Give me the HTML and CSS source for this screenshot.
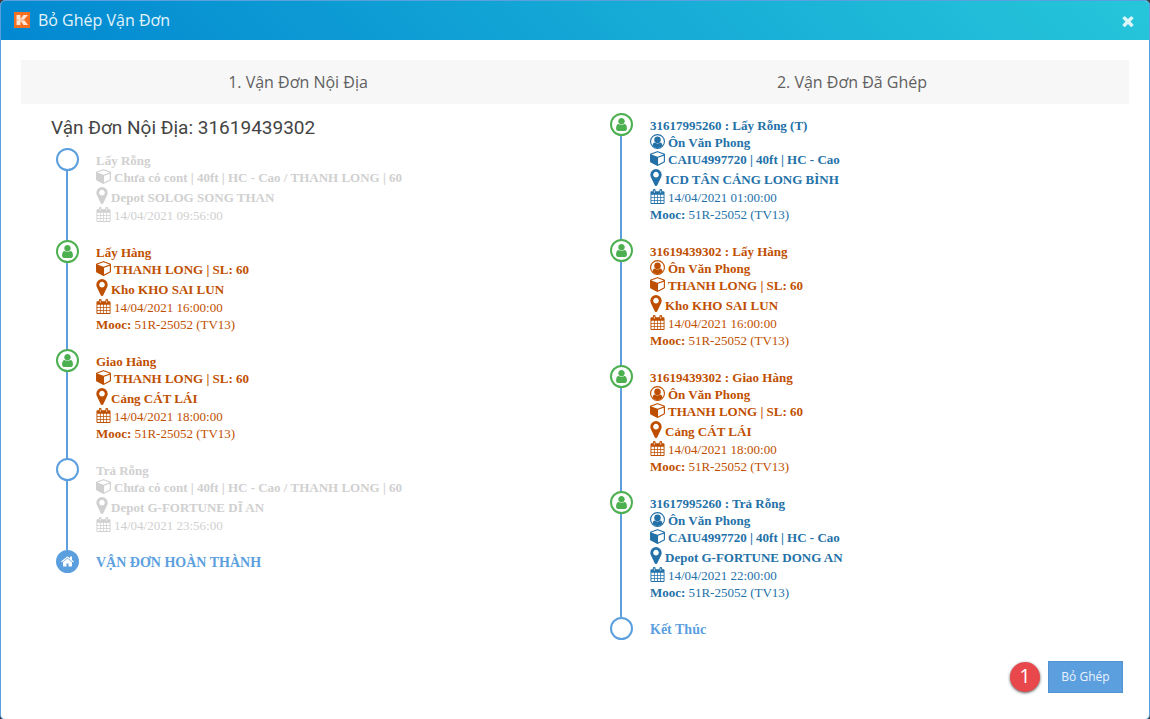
FILE: index.html
```html
<!DOCTYPE html>
<html lang="vi">
<head>
<meta charset="utf-8">
<title>Bỏ Ghép Vận Đơn</title>
<link rel="stylesheet" href="styles.css">
</head>
<body>
<svg class="sprite" aria-hidden="true">
  <symbol id="user" viewBox="256 128 1280 1536"><path d="M1536 1399q0 109-62.5 187t-150.5 78h-854q-88 0-150.5-78t-62.5-187q0-85 8.5-160.5t31.5-152 58.5-131 94-89 134.5-34.5q131 128 313 128t313-128q76 0 134.5 34.5t94 89 58.5 131 31.5 152 8.5 160.5zm-256-887q0 159-112.5 271.5t-271.5 112.5-271.5-112.5-112.5-271.5 112.5-271.5 271.5-112.5 271.5 112.5 112.5 271.5z"/></symbol>
  <symbol id="cube" viewBox="64 120 1664 1672"><path d="M896 1629l640-349v-636l-640 233v752zm-64-865l698-254-698-254-698 254zm832-252v768q0 35-18 65t-49 47l-704 384q-28 16-61 16t-61-16l-704-384q-31-17-49-47t-18-65v-768q0-40 23-73t61-47l704-256q22-8 44-8t44 8l704 256q38 14 61 47t23 73z" transform="translate(64 0)"/></symbol>
  <symbol id="pin" viewBox="384 128 1024 1536"><path d="M1152 640q0-106-75-181t-181-75-181 75-75 181 75 181 181 75 181-75 75-181zm256 0q0 109-33 179l-364 774q-16 33-47.5 52t-67.5 19-67.5-19-46.5-52l-365-774q-33-70-33-179 0-212 150-362t362-150 362 150 150 362z"/></symbol>
  <symbol id="home" viewBox="64 192 1664 1408"><path d="M1472 992v480q0 26-19 45t-45 19h-384v-384h-256v384h-384q-26 0-45-19t-19-45v-480q0-1 .5-3t.5-3l575-474 575 474q1 2 1 6zm223-69l-62 74q-8 9-21 11h-3q-13 0-21-7l-692-577-692 577q-12 8-24 7-13-2-21-11l-62-74q-8-10-7-23.5t11-21.5l719-599q32-26 76-26t76 26l244 204v-195q0-14 9-23t23-9h192q14 0 23 9t9 23v408l219 182q10 8 11 21.5t-7 23.5z"/></symbol>
  <symbol id="calendar" viewBox="0 0 15 16"><path fill-rule="evenodd" d="M1 2.500H2.500V1.500Q2.500 0 4 0T5.500 1.500V2.500H9.500V1.500Q9.500 0 11 0T12.500 1.500V2.500H14Q15 2.500 15 3.500V15Q15 16 14 16H1Q0 16 0 15V3.500Q0 2.500 1 2.500zM3.600 1.500V4H4.400V1.500zM10.600 1.500V4H11.400V1.500zM1 6V8.500H3.700V6zM4.500 6V8.500H7.100V6zM7.900 6V8.500H10.500V6zM11.300 6V8.500H14V6zM1 9.300V11.700H3.700V9.300zM4.500 9.300V11.700H7.100V9.300zM7.900 9.300V11.700H10.500V9.300zM11.300 9.300V11.700H14V9.300zM1 12.500V15H3.700V12.500zM4.500 12.500V15H7.100V12.500zM7.900 12.500V15H10.500V12.500zM11.300 12.500V15H14V12.500z"/></symbol>
  <symbol id="driver" viewBox="0 0 16 16"><circle cx="8" cy="8" r="7.400" fill="none" stroke="currentColor" stroke-width="1.200"/><ellipse cx="8" cy="6.200" rx="3.500" ry="3.600"/><path d="M2.600 12.600Q3 9.200 5.100 9Q8 11.300 10.900 9Q13 9.200 13.400 12.600Q11 15.200 8 15.200T2.600 12.600z"/></symbol>
  <symbol id="close" viewBox="302 238 1188 1316"><path d="M1490 1322q0 40-28 68l-136 136q-28 28-68 28t-68-28l-294-294-294 294q-28 28-68 28t-68-28l-136-136q-28-28-28-68t28-68l294-294-294-294q-28-28-28-68t28-68l136-136q28-28 68-28t68 28l294 294 294-294q28-28 68-28t68 28l136 136q28 28 28 68t-28 68l-294 294 294 294q28 28 28 68z"/></symbol>
</svg>
<main class="dialog">
  <header class="titlebar">
    <svg class="logo" viewBox="0 0 16 16" aria-hidden="true"><rect width="16" height="16" fill="#f36f21"/><path fill="#fde3d2" d="M2.500 3H6.500V7L9.500 3H14L10 7.600L14 13H9.500L6.500 8.800V13H2.500z"/><path stroke="#f36f21" stroke-width=".6" d="M6.500 8H14M2.500 8H4.500"/></svg>
    <h1 class="title">Bỏ Ghép Vận Đơn</h1>
    <button class="close" type="button" aria-label="Đóng"><svg class="icon-close"><use href="#close"/></svg></button>
  </header>
  <div class="content">
    <div class="steps">
      <h2 class="step">1. Vận Đơn Nội Địa</h2>
      <h2 class="step">2. Vận Đơn Đã Ghép</h2>
    </div>
    <div class="columns">
      <section class="column">
        <h3 class="order">Vận Đơn Nội Địa: 31619439302</h3>
        <ol class="timeline">
          <li class="stop muted"><span class="node"></span>
            <div class="info">
              <p class="row bold">Lấy Rỗng</p>
              <p class="row bold"><svg class="icon"><use href="#cube"/></svg>Chưa có cont | 40ft | HC - Cao / THANH LONG | 60</p>
              <p class="row place bold"><svg class="icon pin"><use href="#pin"/></svg>Depot SOLOG SONG THAN</p>
              <p class="row date"><svg class="icon"><use href="#calendar"/></svg>14/04/2021 09:56:00</p>
            </div></li>
          <li class="stop orange"><span class="node done"><svg class="icon-user"><use href="#user"/></svg></span>
            <div class="info">
              <p class="row bold">Lấy Hàng</p>
              <p class="row bold"><svg class="icon"><use href="#cube"/></svg>THANH LONG | SL: 60</p>
              <p class="row place bold"><svg class="icon pin"><use href="#pin"/></svg>Kho KHO SAI LUN</p>
              <p class="row date"><svg class="icon"><use href="#calendar"/></svg>14/04/2021 16:00:00</p>
              <p class="row"><b>Mooc:</b>51R-25052 (TV13)</p>
            </div></li>
          <li class="stop orange"><span class="node done"><svg class="icon-user"><use href="#user"/></svg></span>
            <div class="info">
              <p class="row bold">Giao Hàng</p>
              <p class="row bold"><svg class="icon"><use href="#cube"/></svg>THANH LONG | SL: 60</p>
              <p class="row place bold"><svg class="icon pin"><use href="#pin"/></svg>Cảng CÁT LÁI</p>
              <p class="row date"><svg class="icon"><use href="#calendar"/></svg>14/04/2021 18:00:00</p>
              <p class="row"><b>Mooc:</b>51R-25052 (TV13)</p>
            </div></li>
          <li class="stop muted"><span class="node"></span>
            <div class="info">
              <p class="row bold">Trả Rỗng</p>
              <p class="row bold"><svg class="icon"><use href="#cube"/></svg>Chưa có cont | 40ft | HC - Cao / THANH LONG | 60</p>
              <p class="row place bold"><svg class="icon pin"><use href="#pin"/></svg>Depot G-FORTUNE DĨ AN</p>
              <p class="row date"><svg class="icon"><use href="#calendar"/></svg>14/04/2021 23:56:00</p>
            </div></li>
          <li class="stop end"><span class="node home"><svg class="icon-home"><use href="#home"/></svg></span>
            <p class="finish">VẬN ĐƠN HOÀN THÀNH</p></li>
        </ol>
      </section>
      <section class="column">
        <ol class="timeline">
          <li class="stop blue"><span class="node done"><svg class="icon-user"><use href="#user"/></svg></span>
            <div class="info">
              <p class="row bold">31617995260 : Lấy Rỗng (T)</p>
              <p class="row bold"><svg class="icon"><use href="#driver"/></svg>Ôn Văn Phong</p>
              <p class="row bold"><svg class="icon"><use href="#cube"/></svg>CAIU4997720 | 40ft | HC - Cao</p>
              <p class="row place bold"><svg class="icon pin"><use href="#pin"/></svg>ICD TÂN CẢNG LONG BÌNH</p>
              <p class="row date"><svg class="icon"><use href="#calendar"/></svg>14/04/2021 01:00:00</p>
              <p class="row"><b>Mooc:</b>51R-25052 (TV13)</p>
            </div></li>
          <li class="stop orange"><span class="node done"><svg class="icon-user"><use href="#user"/></svg></span>
            <div class="info">
              <p class="row bold">31619439302 : Lấy Hàng</p>
              <p class="row bold"><svg class="icon"><use href="#driver"/></svg>Ôn Văn Phong</p>
              <p class="row bold"><svg class="icon"><use href="#cube"/></svg>THANH LONG | SL: 60</p>
              <p class="row place bold"><svg class="icon pin"><use href="#pin"/></svg>Kho KHO SAI LUN</p>
              <p class="row date"><svg class="icon"><use href="#calendar"/></svg>14/04/2021 16:00:00</p>
              <p class="row"><b>Mooc:</b>51R-25052 (TV13)</p>
            </div></li>
          <li class="stop orange"><span class="node done"><svg class="icon-user"><use href="#user"/></svg></span>
            <div class="info">
              <p class="row bold">31619439302 : Giao Hàng</p>
              <p class="row bold"><svg class="icon"><use href="#driver"/></svg>Ôn Văn Phong</p>
              <p class="row bold"><svg class="icon"><use href="#cube"/></svg>THANH LONG | SL: 60</p>
              <p class="row place bold"><svg class="icon pin"><use href="#pin"/></svg>Cảng CÁT LÁI</p>
              <p class="row date"><svg class="icon"><use href="#calendar"/></svg>14/04/2021 18:00:00</p>
              <p class="row"><b>Mooc:</b>51R-25052 (TV13)</p>
            </div></li>
          <li class="stop blue"><span class="node done"><svg class="icon-user"><use href="#user"/></svg></span>
            <div class="info">
              <p class="row bold">31617995260 : Trả Rỗng</p>
              <p class="row bold"><svg class="icon"><use href="#driver"/></svg>Ôn Văn Phong</p>
              <p class="row bold"><svg class="icon"><use href="#cube"/></svg>CAIU4997720 | 40ft | HC - Cao</p>
              <p class="row place bold"><svg class="icon pin"><use href="#pin"/></svg>Depot G-FORTUNE DONG AN</p>
              <p class="row date"><svg class="icon"><use href="#calendar"/></svg>14/04/2021 22:00:00</p>
              <p class="row"><b>Mooc:</b>51R-25052 (TV13)</p>
            </div></li>
          <li class="stop end"><span class="node"></span>
            <p class="finish">Kết Thúc</p></li>
        </ol>
      </section>
    </div>
  </div>
  <footer class="actions">
    <span class="marker">1</span>
    <button class="submit" type="button">Bỏ Ghép</button>
  </footer>
</main>
</body>
</html>
```
FILE: styles.css
```css
* { box-sizing: border-box; }
body {
  margin: 0;
  background: #3c3c3c;
  font-family: "Open Sans", "Noto Sans", sans-serif;
}
h1, h2, h3, p, ol { margin: 0; padding: 0; font-weight: 400; }
ol { list-style: none; }
svg { display: block; flex: none; fill: currentColor; }
.sprite { display: none; }

.dialog {
  display: flex;
  flex-direction: column;
  min-height: 100vh;
  border: 1px solid #5c9fdf;
  border-radius: 5px;
  background: #fff;
  overflow: hidden;
}
.titlebar {
  display: flex;
  align-items: center;
  gap: 8px;
  height: 39px;
  padding: 0 15px 2px 13px;
  background: linear-gradient(45deg, #0288d1, #26c6da);
  color: #e4f4fb;
}
.logo { width: 16px; height: 16px; }
.title { flex: 1; font-size: 16px; line-height: 24px; }
.close { padding: 2px 0 0; border: 0; background: none; color: #dcf5f9; cursor: pointer; }
.icon-close { width: 12px; height: 12px; }

.content { padding: 20px 20px 0; }
.steps, .columns { display: grid; grid-template-columns: 1fr 1fr; }
.steps { background: #f7f7f7; }
.step {
  padding: 10px 0;
  text-align: center;
  font-size: 16px;
  line-height: 24px;
  color: #606060;
}
.column { padding: 9px 30px 0; }
.order {
  padding: 3px 0 8px;
  font: 19px/24px Roboto, sans-serif;
  color: #444;
}
.timeline {
  padding-left: 5px;
  font-family: "Liberation Serif", serif;
  font-size: 13px;
}
.stop {
  position: relative;
  display: flex;
  gap: 17px;
  padding-bottom: 16px;
}
.stop::before {
  content: "";
  position: absolute;
  top: 0;
  bottom: 0;
  left: 10px;
  width: 2px;
  background: #5c9fdf;
}
.stop.end { padding-bottom: 0; }
.stop.end::before { display: none; }
.node {
  position: relative;
  display: flex;
  flex: none;
  align-items: center;
  justify-content: center;
  width: 23px;
  height: 23px;
  border: 2px solid #5c9fdf;
  border-radius: 50%;
  background: #fff;
}
.done { border-color: #4caf50; color: #4caf50; }
.home { background: #5c9fdf; color: #fff; }
.icon-user { width: 11px; height: 13px; }
.icon-home { width: 13px; height: 11px; }

.info { padding-top: 4px; }
.row { display: flex; align-items: center; gap: 3px; height: 17px; line-height: 17px; }
.place { height: 20px; padding-top: 2px; }
.date { height: 18px; }
.bold { font-weight: 700; }
.icon { width: 15px; height: 15px; margin-bottom: 2px; }
.pin { width: 12px; height: 17px; margin-bottom: 4px; }
.muted { color: #d0d0d0; }
.orange { color: #bf4f00; }
.blue { color: #2471a8; }
.finish { font-size: 14px; font-weight: 700; line-height: 26px; color: #5c9fdf; }

.actions {
  display: flex;
  align-items: center;
  justify-content: flex-end;
  gap: 8px;
  margin-top: auto;
  padding: 18px 26px 26px;
}
.marker {
  width: 30px;
  height: 30px;
  border-radius: 50%;
  background: #e8474b;
  box-shadow: 0 1px 3px #555;
  color: #fff;
  font-size: 20px;
  line-height: 28px;
  text-align: center;
}
.submit {
  min-width: 75px;
  height: 32px;
  padding: 0 12px;
  border: 1px solid #5293d3;
  background: #5c9fdf;
  color: #e9f3fc;
  font: 12px/18px "Open Sans", "Noto Sans", sans-serif;
  cursor: pointer;
}
```
